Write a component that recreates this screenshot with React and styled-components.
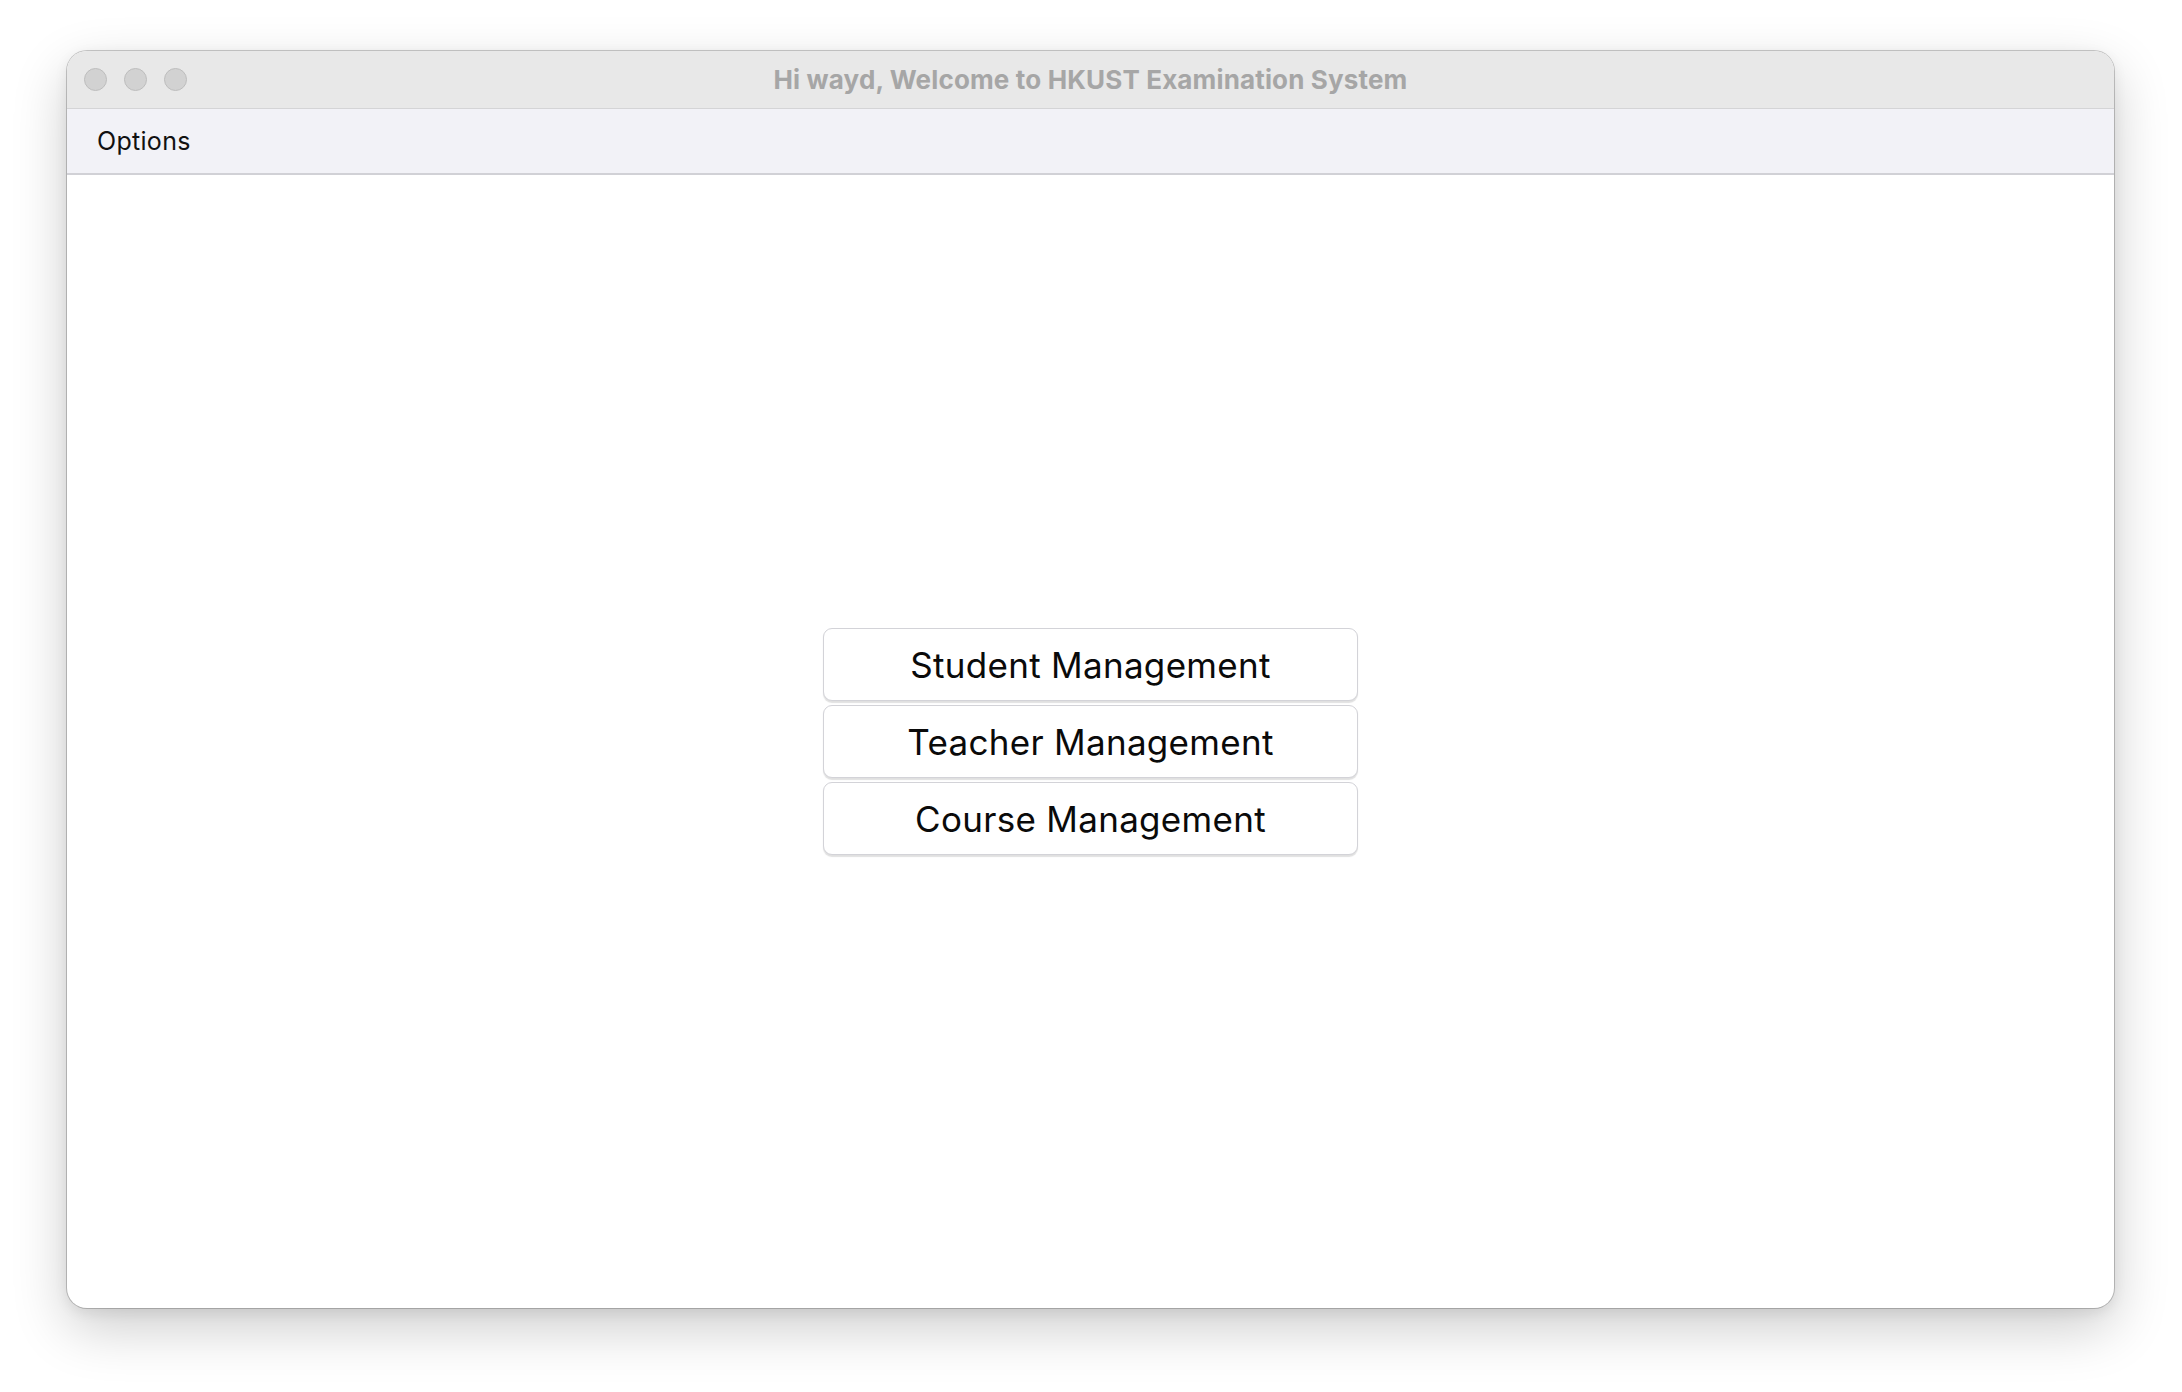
import React from "react";
import styled, { createGlobalStyle } from "styled-components";

const Global = createGlobalStyle`
  html, body {
    margin: 0;
    padding: 0;
    background: #ffffff;
  }
  body {
    font-family: Inter, "Noto Sans", "Liberation Sans", sans-serif;
    -webkit-font-smoothing: antialiased;
  }
`;

const Desktop = styled.div`
  width: 2182px;
  height: 1392px;
  box-sizing: border-box;
  padding: 51px 0 0 67px;
  background: #ffffff;
`;

const Window = styled.div`
  width: 2047px;
  height: 1257px;
  display: flex;
  flex-direction: column;
  border-radius: 20px;
  overflow: hidden;
  background: #ffffff;
  box-shadow: 0 0 0 1px rgba(0, 0, 0, 0.2), 0 20px 55px rgba(0, 0, 0, 0.2),
    0 4px 14px rgba(0, 0, 0, 0.08);
`;

const TitleBar = styled.div`
  position: relative;
  height: 57px;
  flex: none;
  display: flex;
  align-items: center;
  justify-content: center;
  background: #e8e8e8;
  border-bottom: 1px solid #d4d4d6;
`;

const Lights = styled.div`
  position: absolute;
  left: 17px;
  top: 0;
  bottom: 0;
  display: flex;
  align-items: center;
  gap: 17px;
`;

const Light = styled.span`
  width: 23px;
  height: 23px;
  box-sizing: border-box;
  border-radius: 50%;
  background: #d2d2d2;
  border: 1px solid #bdbdbd;
`;

const Title = styled.div`
  font-family: Inter, "Noto Sans", sans-serif;
  font-weight: 700;
  font-size: 26px;
  color: #a6a6a6;
  letter-spacing: 0.15px;
`;

const MenuBar = styled.div`
  height: 64px;
  flex: none;
  display: flex;
  align-items: center;
  padding-left: 30px;
  background: #f2f2f7;
  border-bottom: 2px solid #d1d1d6;
`;

const MenuItem = styled.div`
  font-size: 25px;
  color: #111111;
  letter-spacing: 0.3px;
`;

const Content = styled.div`
  flex: 1;
  display: flex;
  flex-direction: column;
  align-items: center;
  justify-content: center;
  gap: 4px;
`;

const ActionButton = styled.button`
  width: 535px;
  height: 73px;
  box-sizing: border-box;
  border: 1.5px solid #d3d3d8;
  border-radius: 9px;
  background: #ffffff;
  box-shadow: 0 1.5px 1px rgba(0, 0, 0, 0.12);
  font-family: Inter, "Noto Sans", sans-serif;
  font-size: 35px;
  letter-spacing: 0.3px;
  color: #0a0a0a;
  cursor: pointer;
  padding: 0;
`;

const actions = ["Student Management", "Teacher Management", "Course Management"];

export default function App() {
  return (
    <>
      <Global />
      <Desktop>
        <Window>
          <TitleBar>
            <Lights>
              <Light />
              <Light />
              <Light />
            </Lights>
            <Title>Hi wayd, Welcome to HKUST Examination System</Title>
          </TitleBar>
          <MenuBar>
            <MenuItem>Options</MenuItem>
          </MenuBar>
          <Content>
            {actions.map((a) => (
              <ActionButton key={a}>{a}</ActionButton>
            ))}
          </Content>
        </Window>
      </Desktop>
    </>
  );
}
